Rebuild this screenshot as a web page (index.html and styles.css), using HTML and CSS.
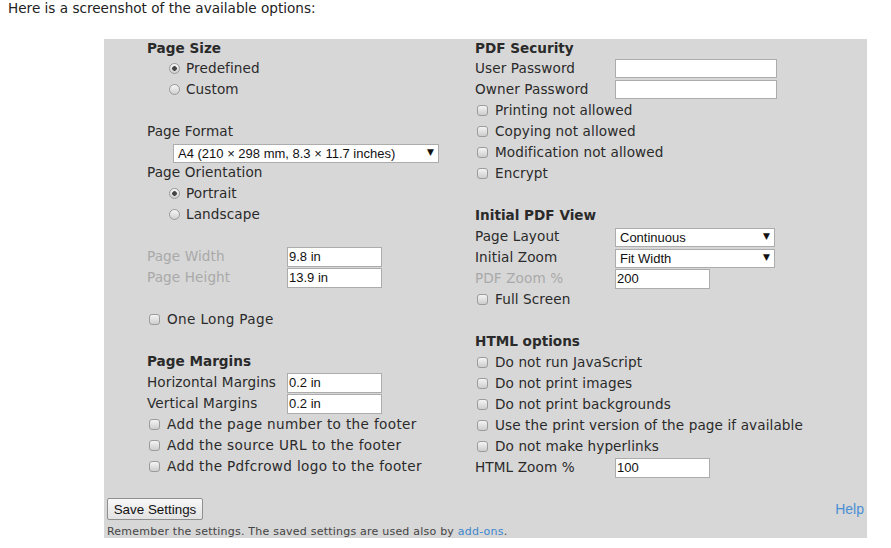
FILE: index.html
```html
<!DOCTYPE html>
<html>
<head>
<meta charset="utf-8">
<link rel="stylesheet" href="styles.css">
</head>
<body>
<div class="intro">Here is a screenshot of the available options:</div>
<div class="panel">
  <div class="cols">
    <div class="col left">
      <div class="row head">Page Size</div>
      <label class="row opt"><input type="radio" name="ps" class="radio" checked>Predefined</label>
      <label class="row opt"><input type="radio" name="ps" class="radio">Custom</label>
      <div class="row"></div>
      <div class="row">Page Format</div>
      <div class="row sel-indent"><span class="sel wide"><select><option>A4 (210 × 298 mm, 8.3 × 11.7 inches)</option></select></span></div>
      <div class="row">Page Orientation</div>
      <label class="row opt"><input type="radio" name="po" class="radio" checked>Portrait</label>
      <label class="row opt"><input type="radio" name="po" class="radio">Landscape</label>
      <div class="row"></div>
      <div class="row field"><span class="lbl dis">Page Width</span><input class="txt short" value="9.8 in"></div>
      <div class="row field"><span class="lbl dis">Page Height</span><input class="txt short" value="13.9 in"></div>
      <div class="row"></div>
      <label class="row cb"><input type="checkbox" class="check">One Long Page</label>
      <div class="row"></div>
      <div class="row head">Page Margins</div>
      <div class="row field"><span class="lbl">Horizontal Margins</span><input class="txt short" value="0.2 in"></div>
      <div class="row field"><span class="lbl">Vertical Margins</span><input class="txt short" value="0.2 in"></div>
      <label class="row cb"><input type="checkbox" class="check">Add the page number to the footer</label>
      <label class="row cb"><input type="checkbox" class="check">Add the source URL to the footer</label>
      <label class="row cb"><input type="checkbox" class="check">Add the Pdfcrowd logo to the footer</label>
    </div>
    <div class="col right">
      <div class="row head">PDF Security</div>
      <div class="row field"><span class="lbl">User Password</span><input class="txt long pw" type="password"></div>
      <div class="row field"><span class="lbl">Owner Password</span><input class="txt long pw" type="password"></div>
      <label class="row cb"><input type="checkbox" class="check">Printing not allowed</label>
      <label class="row cb"><input type="checkbox" class="check">Copying not allowed</label>
      <label class="row cb"><input type="checkbox" class="check">Modification not allowed</label>
      <label class="row cb"><input type="checkbox" class="check">Encrypt</label>
      <div class="row"></div>
      <div class="row head">Initial PDF View</div>
      <div class="row field"><span class="lbl">Page Layout</span><span class="sel mid"><select><option>Continuous</option></select></span></div>
      <div class="row field"><span class="lbl">Initial Zoom</span><span class="sel mid"><select><option>Fit Width</option></select></span></div>
      <div class="row field"><span class="lbl dis">PDF Zoom %</span><input class="txt short" value="200"></div>
      <label class="row cb"><input type="checkbox" class="check">Full Screen</label>
      <div class="row"></div>
      <div class="row head">HTML options</div>
      <label class="row cb"><input type="checkbox" class="check">Do not run JavaScript</label>
      <label class="row cb"><input type="checkbox" class="check">Do not print images</label>
      <label class="row cb"><input type="checkbox" class="check">Do not print backgrounds</label>
      <label class="row cb"><input type="checkbox" class="check">Use the print version of the page if available</label>
      <label class="row cb"><input type="checkbox" class="check">Do not make hyperlinks</label>
      <div class="row field"><span class="lbl">HTML Zoom %</span><input class="txt short" value="100"></div>
    </div>
  </div>
  <div class="actions">
    <button class="btn">Save Settings</button>
    <a class="help" href="#">Help</a>
  </div>
  <div class="note">Remember the settings. The saved settings are used also by <a href="#">add-ons</a>.</div>
</div>
</body>
</html>
```

FILE: styles.css
```css
html, body {
  margin: 0;
  padding: 0;
  background: #ffffff;
}
body {
  padding-left: 8px;
  font-family: "DejaVu Sans", "Noto Sans", sans-serif;
  font-size: 13.6px;
  color: #222222;
}
.intro {
  line-height: 17px;
  height: 17px;
  margin-bottom: 22px;
}
.panel {
  margin-left: 96px;
  width: 763px;
  box-sizing: border-box;
  height: 499px;
  background: #d7d7d7;
  padding: 0 3px;
  color: #2a2a2a;
}
.cols {
  display: grid;
  grid-template-columns: 328px 1fr;
  padding-left: 40px;
  letter-spacing: 0.1px;
}
.col {
  display: flex;
  flex-direction: column;
}
.row {
  display: flex;
  align-items: center;
  height: 21px;
  line-height: 21px;
  white-space: nowrap;
}
.col > .row:first-child {
  height: 19px;
  line-height: 18px;
  align-items: flex-start;
}
.left .sel-indent {
  height: 20px;
}
.left .cb {
  letter-spacing: 0.35px;
}
.head {
  font-weight: bold;
  letter-spacing: 0;
}
.lbl {
  width: 140px;
  flex: none;
}
.dis {
  color: #a9a9a9;
}
.check {
  -webkit-appearance: none;
  appearance: none;
  width: 11px;
  height: 11px;
  margin: 0 7px 0 2px;
  box-sizing: border-box;
  border: 1px solid #9c9c9c;
  border-radius: 3px;
  background: linear-gradient(#f4f4f4, #cdcdcd);
  flex: none;
}
.radio {
  -webkit-appearance: none;
  appearance: none;
  width: 11px;
  height: 11px;
  margin: 0 6px 0 22px;
  box-sizing: border-box;
  border: 1px solid #9a9a9a;
  border-radius: 50%;
  background: linear-gradient(#f6f6f6, #d0d0d0);
  flex: none;
}
.radio:checked {
  background: radial-gradient(circle, #444444 0, #444444 2px, transparent 2.6px), linear-gradient(#f6f6f6, #d0d0d0);
}
.txt {
  box-sizing: border-box;
  height: 20px;
  border: 1px solid #acacac;
  background: #ffffff;
  padding: 0 0 0 1px;
  margin: 0;
  font-family: "Liberation Sans", Arial, sans-serif;
  font-size: 13px;
  letter-spacing: 0;
  color: #111111;
  outline: none;
}
.short {
  width: 95px;
}
.long {
  width: 162px;
  height: 19px;
}
.sel-indent {
  padding-left: 26px;
}
.sel {
  position: relative;
  display: inline-block;
  height: 19px;
}
.sel select {
  -webkit-appearance: none;
  appearance: none;
  box-sizing: border-box;
  width: 100%;
  height: 19px;
  border: 1px solid #acacac;
  background: #ffffff;
  border-radius: 0;
  padding: 0 0 0 4px;
  margin: 0;
  font-family: "Liberation Sans", Arial, sans-serif;
  font-size: 13px;
  letter-spacing: 0;
  color: #111111;
  line-height: 17px;
}
.sel::after {
  content: "▼";
  position: absolute;
  right: 5px;
  top: 0;
  line-height: 19px;
  font-size: 9px;
  color: #111111;
  font-family: "DejaVu Sans", sans-serif;
}
.wide {
  width: 266px;
}
.mid {
  width: 160px;
}
.actions {
  display: flex;
  justify-content: space-between;
  align-items: center;
  margin-top: 20px;
}
.btn {
  box-sizing: border-box;
  width: 96px;
  height: 22px;
  padding: 0;
  margin: 0;
  border: 1px solid #8f8f8f;
  border-radius: 2px;
  background: linear-gradient(#f8f8f8, #e2e2e2);
  font-family: "Liberation Sans", Arial, sans-serif;
  font-size: 13.4px;
  color: #111111;
}
.help {
  font-family: "Liberation Sans", Arial, sans-serif;
  font-size: 14px;
  color: #4a8fd5;
  text-decoration: none;
}
.note {
  margin-top: 5px;
  font-size: 11px;
  line-height: 13px;
  color: #444444;
  letter-spacing: 0.22px;
  white-space: nowrap;
}
.note a {
  color: #3d87cf;
  text-decoration: none;
}
```
